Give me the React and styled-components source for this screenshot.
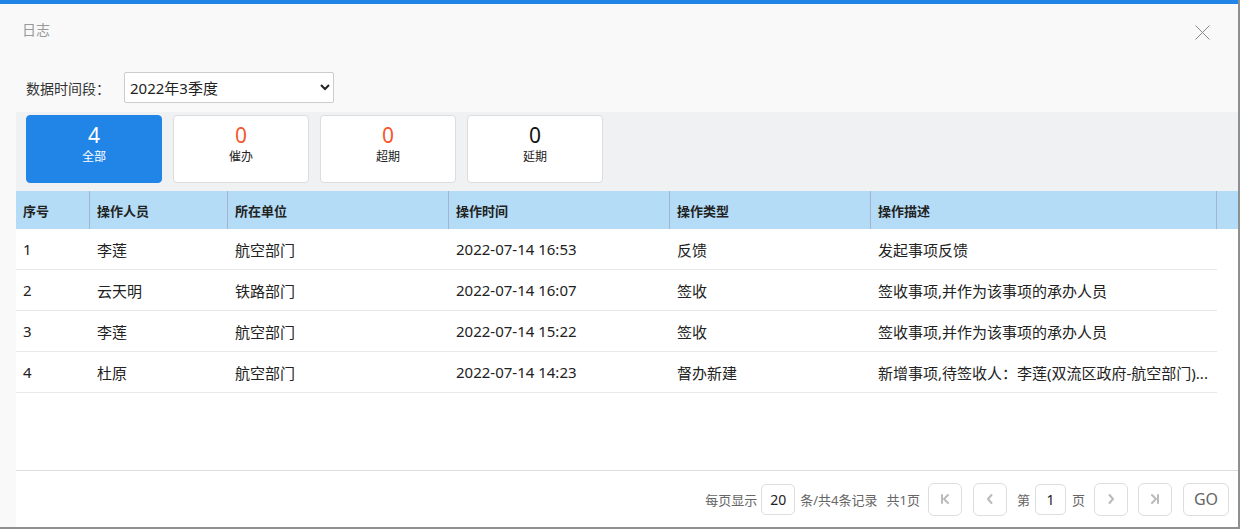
import React from 'react';
import styled, { createGlobalStyle } from 'styled-components';

const GlobalStyle = createGlobalStyle`
  html, body {
    margin: 0;
    padding: 0;
    background: #8f8f8f;
  }
  body {
    font-family: "Noto Sans", "Noto Sans CJK SC", sans-serif;
    color: #333;
  }
  * { box-sizing: border-box; }
`;

// 弹窗外框
const Modal = styled.div`
  width: 1238px;
  height: 527px;
  background: #f9f9f9;
  border-top: 4px solid #2185e8;
  display: flex;
  flex-direction: column;
`;

const Header = styled.div`
  height: 51px;
  padding: 0 28px 0 22px;
  display: flex;
  align-items: center;
  justify-content: space-between;
`;

const Title = styled.span`
  font-size: 14px;
  color: #999;
  margin-top: -2px;
`;

const CloseBtn = styled.button`
  width: 15px;
  height: 15px;
  padding: 0;
  border: none;
  background: transparent;
  cursor: pointer;
  display: flex;
  margin-top: 6px;
`;

const FilterRow = styled.div`
  margin-top: 17px;
  padding-left: 26px;
  display: flex;
  align-items: center;
  height: 31px;
`;

const Label = styled.span`
  font-size: 14px;
  color: #333;
  width: 98px;
`;

const Select = styled.select`
  width: 210px;
  height: 31px;
  border: 1px solid #ccc;
  border-radius: 2px;
  background: #fff;
  font-family: inherit;
  font-size: 15px;
  color: #222;
  padding: 0 1px;
  outline: none;
`;

const Content = styled.div`
  margin-top: 9px;
  margin-left: 16px;
  flex: 1;
  display: flex;
  flex-direction: column;
  background: #fff;
`;

const StatBar = styled.div`
  background: #f0f1f3;
  padding: 3px 10px 8px;
  display: flex;
  gap: 11px;
`;

const StatCard = styled.div`
  width: 136px;
  height: 68px;
  padding-bottom: 9px;
  border-radius: 4px;
  border: 1px solid ${p => (p.$active ? '#2185e8' : '#dcdcdc')};
  background: ${p => (p.$active ? '#2185e8' : '#fff')};
  display: flex;
  flex-direction: column;
  align-items: center;
  justify-content: center;
  cursor: pointer;
`;

const StatNum = styled.div`
  font-size: 21px;
  line-height: 24px;
  color: ${p => p.$color};
`;

const StatLabel = styled.div`
  font-size: 12px;
  line-height: 18px;
  margin-top: 1px;
  color: ${p => p.$color};
`;

const TableWrap = styled.div`
  flex: 1;
  display: flex;
  flex-direction: column;
`;

const HeadRow = styled.div`
  display: flex;
  height: 38px;
  background: #b4dcf7;
`;

const HeadCell = styled.div`
  width: ${p => p.$w}px;
  flex: none;
  padding-left: 7px;
  display: flex;
  align-items: center;
  font-size: 13px;
  font-weight: 600;
  color: #222;
  border-right: 1px solid #a3b4cf;
`;

const Gutter = styled.div`
  flex: 1;
`;

const Row = styled.div`
  display: flex;
  height: 41px;
  width: 1201px;
  border-bottom: 1px solid #e8e8e8;
`;

const Cell = styled.div`
  width: ${p => p.$w}px;
  flex: none;
  padding: 0 7px;
  display: flex;
  align-items: center;
  font-size: 15px;
  color: #222;
  white-space: nowrap;
  overflow: hidden;
`;

const Footer = styled.div`
  height: 57px;
  border-top: 1px solid #dcdcdc;
  display: flex;
  align-items: center;
  justify-content: flex-end;
  padding-right: 9px;
  font-size: 13px;
  color: #666;
`;

const Text = styled.span`
  margin-left: ${p => p.$ml || 0}px;
  margin-right: ${p => p.$mr || 0}px;
`;

const PageInput = styled.div`
  width: ${p => p.$w || 34}px;
  height: 31px;
  border: 1px solid #ddd;
  border-radius: 5px;
  display: flex;
  align-items: center;
  justify-content: center;
  font-size: 14px;
  color: #222;
`;

const PageBtn = styled.button`
  width: ${p => p.$w || 34}px;
  height: 33px;
  border: 1px solid #ddd;
  border-radius: 6px;
  background: #fff;
  display: flex;
  align-items: center;
  justify-content: center;
  padding: 0;
  margin-left: ${p => p.$ml || 0}px;
  color: #666;
  font-family: inherit;
  font-size: 16px;
  cursor: pointer;
`;

const cols = [
  { key: 'no', title: '序号', w: 74 },
  { key: 'user', title: '操作人员', w: 138 },
  { key: 'unit', title: '所在单位', w: 221 },
  { key: 'time', title: '操作时间', w: 221 },
  { key: 'type', title: '操作类型', w: 201 },
  { key: 'desc', title: '操作描述', w: 346 },
];

const rows = [
  { no: 1, user: '李莲', unit: '航空部门', time: '2022-07-14 16:53', type: '反馈', desc: '发起事项反馈' },
  { no: 2, user: '云天明', unit: '铁路部门', time: '2022-07-14 16:07', type: '签收', desc: '签收事项,并作为该事项的承办人员' },
  { no: 3, user: '李莲', unit: '航空部门', time: '2022-07-14 15:22', type: '签收', desc: '签收事项,并作为该事项的承办人员' },
  { no: 4, user: '杜原', unit: '航空部门', time: '2022-07-14 14:23', type: '督办新建', desc: '新增事项,待签收人：李莲(双流区政府-航空部门)...' },
];

const stats = [
  { num: 4, label: '全部', active: true },
  { num: 0, label: '催办', color: '#f5572b' },
  { num: 0, label: '超期', color: '#f5572b' },
  { num: 0, label: '延期', color: '#111' },
];

const Icon = ({ d }) => (
  <svg width="14" height="14" viewBox="0 0 14 14" fill="none" stroke="#bbb" strokeWidth="2" strokeLinecap="round" strokeLinejoin="round">
    <path d={d} />
  </svg>
);

export default function App() {
  return (
    <>
      <GlobalStyle />
      <Modal>
        <Header>
          <Title>日志</Title>
          <CloseBtn aria-label="关闭">
            <svg width="15" height="15" viewBox="0 0 15 15" stroke="#888" strokeWidth="1">
              <path d="M0.5 0.5L14.5 14.5M14.5 0.5L0.5 14.5" />
            </svg>
          </CloseBtn>
        </Header>

        <FilterRow>
          <Label>数据时间段：</Label>
          <Select defaultValue="2022Q3">
            <option value="2022Q3">2022年3季度</option>
            <option value="2022Q2">2022年2季度</option>
            <option value="2022Q1">2022年1季度</option>
          </Select>
        </FilterRow>

        <Content>
          <StatBar>
            {stats.map(s => (
              <StatCard key={s.label} $active={s.active}>
                <StatNum $color={s.active ? '#fff' : s.color}>{s.num}</StatNum>
                <StatLabel $color={s.active ? '#fff' : '#222'}>{s.label}</StatLabel>
              </StatCard>
            ))}
          </StatBar>

          <TableWrap>
            <HeadRow>
              {cols.map(c => (
                <HeadCell key={c.key} $w={c.w}>{c.title}</HeadCell>
              ))}
              <Gutter />
            </HeadRow>
            {rows.map(r => (
              <Row key={r.no}>
                {cols.map(c => (
                  <Cell key={c.key} $w={c.w}>{r[c.key]}</Cell>
                ))}
              </Row>
            ))}
          </TableWrap>

          <Footer>
            <Text $mr={4}>每页显示</Text>
            <PageInput>20</PageInput>
            <Text $ml={5}>条/共4条记录</Text>
            <Text $ml={9} $mr={8}>共1页</Text>
            <PageBtn><Icon d="M4 3v8M10 3L6 7l4 4" /></PageBtn>
            <PageBtn $ml={11}><Icon d="M8.5 3L5 7l3.5 4" /></PageBtn>
            <Text $ml={10} $mr={5}>第</Text>
            <PageInput $w={31}>1</PageInput>
            <Text $ml={6} $mr={9}>页</Text>
            <PageBtn><Icon d="M5.5 3L9 7l-3.5 4" /></PageBtn>
            <PageBtn $ml={10}><Icon d="M4 3l4 4-4 4M10 3v8" /></PageBtn>
            <PageBtn $ml={11} $w={46}>GO</PageBtn>
          </Footer>
        </Content>
      </Modal>
    </>
  );
}
